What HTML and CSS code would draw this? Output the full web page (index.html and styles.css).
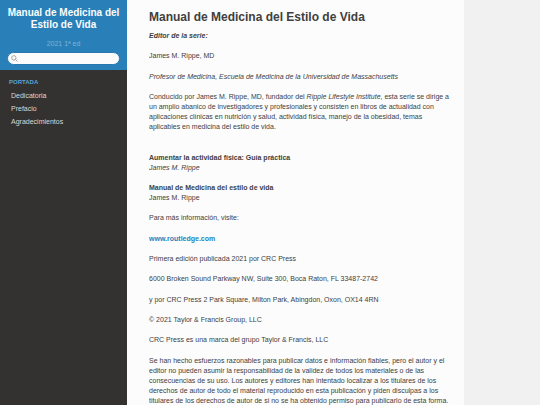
FILE: index.html
```html
<!DOCTYPE html>
<html lang="es">
<head>
<meta charset="utf-8">
<meta name="viewport" content="width=device-width, initial-scale=1">
<title>Manual de Medicina del Estilo de Vida</title>
<link rel="stylesheet" href="styles.css">
</head>
<body>
<div class="layout">
  <aside class="sidebar">
    <header class="brand">
      <a class="brand-title" href="#">Manual de Medicina del Estilo de Vida</a>
      <p class="edition">2021 1ª ed</p>
      <form class="search" role="search">
        <svg class="search-icon" viewBox="0 0 16 16" aria-hidden="true"><circle cx="6.5" cy="6.5" r="5"/><path d="M10.2 10.2 15 15"/></svg>
        <input type="search" aria-label="Buscar">
      </form>
    </header>
    <nav class="menu" aria-label="Contenido">
      <h2>Portada</h2>
      <ul>
        <li><a href="#">Dedicatoria</a></li>
        <li><a href="#">Prefacio</a></li>
        <li><a href="#">Agradecimientos</a></li>
      </ul>
    </nav>
  </aside>
  <main class="content">
    <h1>Manual de Medicina del Estilo de Vida</h1>
    <section class="group">
      <p><strong><em>Editor de la serie:</em></strong></p>
      <p>James M. Rippe, MD</p>
    </section>
    <section class="group series">
      <p><em>Profesor de Medicina, Escuela de Medicina de la Universidad de Massachusetts</em></p>
      <p>Conducido por James M. Rippe, MD, fundador del <em>Ripple Lifestyle Institute</em>, esta serie se dirige a<br>un amplio abanico de investigadores y profesionales y consisten en libros de actualidad con<br>aplicaciones clínicas en nutrición y salud, actividad física, manejo de la obesidad, temas<br>aplicables en medicina del estilo de vida.</p>
    </section>
    <section class="group">
      <p><strong>Aumentar la actividad física: Guía práctica</strong><br><em>James M. Rippe</em></p>
      <p><strong>Manual de Medicina del estilo de vida</strong><br>James M. Rippe</p>
      <p>Para más información, visite:</p>
    </section>
    <section class="group">
      <p><a class="site" href="#">www.routledge.com</a></p>
      <p>Primera edición publicada 2021 por CRC Press</p>
      <p>6000 Broken Sound Parkway NW, Suite 300, Boca Raton, FL 33487-2742</p>
    </section>
    <section class="group">
      <p>y por CRC Press 2 Park Square, Milton Park, Abingdon, Oxon, OX14 4RN</p>
      <p>© 2021 Taylor &amp; Francis Group, LLC</p>
      <p>CRC Press es una marca del grupo Taylor &amp; Francis, LLC</p>
    </section>
    <section class="group">
      <p>Se han hecho esfuerzos razonables para publicar datos e información fiables, pero el autor y el<br>editor no pueden asumir la responsabilidad de la validez de todos los materiales o de las<br>consecuencias de su uso. Los autores y editores han intentado localizar a los titulares de los<br>derechos de autor de todo el material reproducido en esta publicación y piden disculpas a los<br>titulares de los derechos de autor de si no se ha obtenido permiso para publicarlo de esta forma.</p>
    </section>
  </main>
</div>
</body>
</html>
```
FILE: styles.css
```css
* {
  box-sizing: border-box;
}

body {
  margin: 0;
  background: #f1f1f1;
  color: #404040;
  font: 7px/10px "Liberation Sans", Arial, sans-serif;
}

h1, h2, p, ul {
  margin: 0;
  padding: 0;
}

a {
  color: inherit;
  text-decoration: none;
}

.layout {
  display: flex;
  min-height: 100vh;
}

.sidebar {
  flex: 0 0 127px;
  background: #343131;
}

.brand {
  padding: 7px 7px 5px;
  background: #2980b9;
  text-align: center;
}

.brand-title {
  display: block;
  color: #fcfcfc;
  font-size: 10px;
  font-weight: bold;
  line-height: 12px;
}

.edition {
  margin: 8px 0 3px;
  color: rgba(255, 255, 255, 0.4);
}

.search {
  position: relative;
}

.search input {
  display: block;
  width: 100%;
  height: 13px;
  padding: 0 8px 0 14px;
  border: 1px solid #2779b0;
  border-radius: 7px;
  background: #fcfcfc;
  font: inherit;
}

.search-icon {
  position: absolute;
  top: 3px;
  left: 4px;
  width: 7px;
  height: 7px;
  fill: none;
  stroke: #999;
  stroke-width: 2;
}

.menu {
  padding: 6px 9px;
}

.menu h2 {
  color: #55a5d9;
  font-size: 6px;
  line-height: 13px;
  text-transform: uppercase;
}

.menu ul {
  list-style: none;
}

.menu li a {
  display: block;
  padding: 0 2px;
  color: #d9d9d9;
  line-height: 13px;
}

.content {
  flex: 0 1 337px;
  padding: 10px 14px 0 22px;
  background: #fcfcfc;
}

h1 {
  margin-bottom: 6px;
  font-size: 12px;
  line-height: 15px;
}

.group {
  display: flex;
  flex-direction: column;
  gap: 10px;
  margin-bottom: 11px;
}

.series {
  margin-bottom: 21px;
}

.site {
  color: #2980b9;
  font-weight: bold;
}
```
